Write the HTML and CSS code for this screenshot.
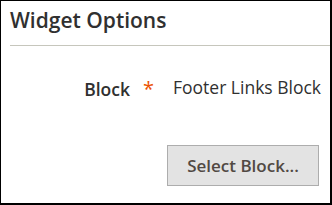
FILE: index.html
```html
<!DOCTYPE html>
<html lang="en">
<head>
    <meta charset="UTF-8">
    <title>Widget Options</title>
    <link rel="stylesheet" href="styles.css">
</head>
<body>
    <div class="frame">
        <div class="section-title">
            <h2>Widget Options</h2>
        </div>
        <div class="field">
            <label class="field-label">Block</label>
            <span class="required">*</span>
            <span class="field-value">Footer Links Block</span>
        </div>
        <div class="actions">
            <button class="action-default">Select Block...</button>
        </div>
    </div>
</body>
</html>
```

FILE: styles.css
```css
html, body {
    margin: 0;
    padding: 0;
    background: #fff;
}

.frame {
    width: 332px;
    height: 205px;
    border-top: 1px solid #000;
    border-left: 1px solid #000;
    border-right: 2px solid #000;
    border-bottom: 2px solid #000;
    padding-left: 9px;
    font-family: "Open Sans", sans-serif;
    color: #303030;
    box-sizing: border-box;
}

.section-title {
    height: 45px;
    border-bottom: 1px solid #c6c6bc;
    box-sizing: border-box;
}

.section-title h2 {
    margin: 0;
    padding-top: 5px;
    font-size: 21px;
    font-weight: 600;
    line-height: 28px;
}

.field {
    display: flex;
    align-items: flex-start;
    margin-top: 30px;
    font-size: 17.5px;
    line-height: 22px;
}

.field-label {
    width: 120px;
    padding-top: 2px;
    text-align: right;
    font-weight: 600;
}

.required {
    color: #eb5202;
    font-size: 20px;
    line-height: 22px;
    padding-top: 2px;
    margin-left: 13px;
    width: 30px;
}

.field-value {
    font-weight: 400;
}

.actions {
    display: flex;
    justify-content: flex-end;
    margin-top: 45px;
    padding-right: 11px;
}

.action-default {
    width: 152px;
    height: 41px;
    background: #e3e3e3;
    border: 1px solid #adadad;
    font-family: "Open Sans", sans-serif;
    font-size: 17px;
    font-weight: 600;
    color: #514943;
    padding: 0;
}
```
